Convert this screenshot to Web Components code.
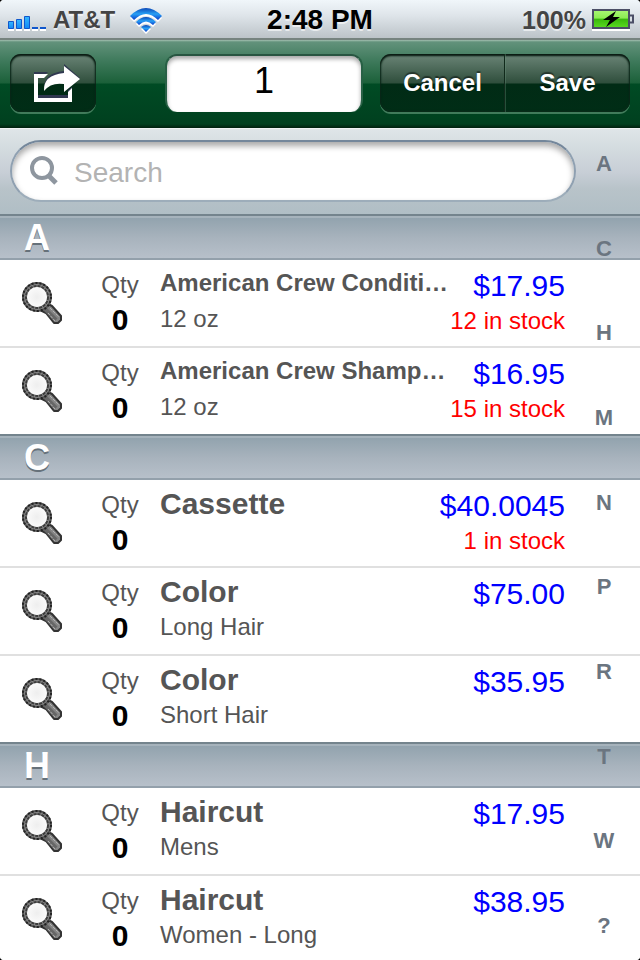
<!DOCTYPE html>
<html lang="en">
<head>
<meta charset="utf-8">
<meta name="viewport" content="width=device-width, initial-scale=1">
<title>Products</title>
<style>
  html { background: #000; }
  body { margin: 0; font-family: "Liberation Sans", Arial, sans-serif; color: #555; background: #fff; height: 100vh; overflow: hidden; position: relative; border-radius: 4px; }
</style>
</head>
<body>
<status-bar></status-bar>
<nav-bar></nav-bar>
<search-bar></search-bar>
<main>
  <item-section letter="A">
    <item-row compact name="American Crew Conditi…" detail="12 oz" price="$17.95" stock="12 in stock"></item-row>
    <item-row compact name="American Crew Shamp…" detail="12 oz" price="$16.95" stock="15 in stock"></item-row>
  </item-section>
  <item-section letter="C">
    <item-row name="Cassette" price="$40.0045" stock="1 in stock"></item-row>
    <item-row name="Color" detail="Long Hair" price="$75.00"></item-row>
    <item-row name="Color" detail="Short Hair" price="$35.95"></item-row>
  </item-section>
  <item-section letter="H">
    <item-row name="Haircut" detail="Mens" price="$17.95"></item-row>
    <item-row name="Haircut" detail="Women - Long" price="$38.95"></item-row>
  </item-section>
</main>
<letter-index letters="ACHMNPRTW?"></letter-index>

<script>
function define(name, html, setup) {
  const template = document.createElement('template');
  template.innerHTML = html;
  customElements.define(name, class extends HTMLElement {
    connectedCallback() {
      if (this.shadowRoot) return;
      const root = this.attachShadow({ mode: 'open' });
      root.append(template.content.cloneNode(true));
      if (setup) setup(this, root);
    }
  });
}

define('status-bar', `
<style>
  :host { display: grid; grid-template-columns: 1fr auto 1fr; align-items: center; height: 40px; padding: 2px 8px 0; box-sizing: border-box;
    background: linear-gradient(#f0f6fa, #dfe5ea 40%, #bcc3c8); border-bottom: 2px solid #76837f; text-shadow: 0 2px 0 rgba(255,255,255,.6); font-weight: bold; }
  div { display: flex; align-items: center; }
  .carrier { gap: 7px; font-size: 24px; color: #444; }
  .wifi { margin-left: 7px; }
  time { font-size: 28px; line-height: 36px; color: #000; }
  .power { justify-content: flex-end; gap: 6px; font-size: 25px; color: #444; }
  svg { display: block; }
  .power svg { margin-right: -2px; }
</style>
<div class="carrier">
  <svg width="38" height="22" viewBox="0 0 38 22" aria-label="Signal" role="img">
    <path d="M0 21h6M8 21h6M16 21h6M24 21h6M32 21h6" stroke="#fff" stroke-width="2"/>
    <defs><linearGradient id="g" x2="0" y2="1"><stop stop-color="#35b8ff"/><stop offset="1" stop-color="#1288f5"/></linearGradient></defs>
    <g fill="url(#g)" stroke="#1057cc"><path d="M.5 12.500h5v7h-5z"/><path d="M8.500 10.500h5v9h-5z"/><path d="M16.500 7.500h5v12h-5z"/></g>
    <path d="M24 19h6M32 19h6" stroke="#1057cc" stroke-width="2"/>
  </svg>
  <span>AT&amp;T</span>
  <svg class="wifi" width="34" height="28" viewBox="0 0 34 28" aria-label="Wi-Fi" role="img">
    <defs><linearGradient id="w" x2="0" y2="1"><stop stop-color="#0b48b8"/><stop offset=".5" stop-color="#28a0f5"/><stop offset="1" stop-color="#0a3cc8"/></linearGradient></defs>
    <g fill="#fff" transform="translate(0 2)"><path d="M1 10Q17-6 33 10L29 14Q17 2 5 14Z"/><path d="M7 16Q17 6 27 16L24 19Q17 12 10 19Z"/><path d="M12 21Q17 17 22 21L17 26Z"/></g>
    <g fill="url(#w)"><path d="M1 10Q17-6 33 10L29 14Q17 2 5 14Z"/><path d="M7 16Q17 6 27 16L24 19Q17 12 10 19Z"/><path d="M12 21Q17 17 22 21L17 26Z"/></g>
  </svg>
</div>
<time>2:48 PM</time>
<div class="power"><span>100%</span>
  <svg width="42" height="26" viewBox="0 0 42 26" aria-label="Battery charging" role="img">
    <defs><linearGradient id="b" x2="0" y2="1"><stop stop-color="#a5f570"/><stop offset=".45" stop-color="#8cec52"/><stop offset=".5" stop-color="#39b80c"/><stop offset="1" stop-color="#58d820"/></linearGradient></defs>
    <path d="M0 23h38" stroke="#fff" stroke-width="2"/>
    <rect x="1" y="3" width="36" height="18" fill="#dff5d5" stroke="#4b4e66" stroke-width="2"/>
    <rect x="2" y="4" width="34" height="16" fill="url(#b)"/>
    <path d="M38 8.500h3v7h-3" fill="none" stroke="#4b4e66" stroke-width="2"/>
    <path d="M24 4L11 13h7l-4 7 14-10h-7z" fill="#000"/>
  </svg>
</div>`);

define('nav-bar', `
<style>
  :host { display: flex; align-items: center; justify-content: space-between; height: 88px; padding: 0 10px 2px; box-sizing: border-box;
    background: linear-gradient(#a3bfb0 0, #62927b 2px, #407b5d 20px, #1b6039 43px, #004b24 44px, #00401f 84px, #00200e 88px); }
  button { height: 58px; margin: 0; padding: 0; border: 0; font: bold 24px/58px "Liberation Sans", Arial, sans-serif; color: #fff; background: none; text-shadow: 0 -2px 1px rgba(0,0,0,.45); }
  .share, .group { border-radius: 11px; overflow: hidden;
    background: linear-gradient(#6b8577, #2f4e3c 29px, #012b15 30px, #002d16); box-shadow: inset 0 2px 2px #0b1c13, inset 0 0 2px 1px #0b2c1b, 0 2px 0 rgba(130,180,150,.5); }
  .share { width: 86px; padding-left: 7px; display: grid; place-items: center; }
  input { width: 198px; height: 58px; box-sizing: border-box; margin: 0 0 0 52px; padding: 0 0 6px; border: 2px solid #286045; border-top-color: #285541; border-bottom: 0; border-radius: 12px; background: #fff;
    box-shadow: inset 0 3px 4px rgba(0,0,0,.35); text-align: center; font: 36px/50px "Liberation Sans", Arial, sans-serif; color: #000; outline: 0; }
  .group { display: flex; }
  .group button { width: 125px; }
  .group button + button { box-shadow: -1px 0 0 #10291b, inset 1px 0 0 rgba(110,150,125,.35); }
</style>
<button class="share" aria-label="Share">
  <svg width="48" height="40" viewBox="0 0 48 40">
    <path fill="#303850" d="M1 9H15L11 13H5V33H35V27L39 24V37H1ZM31 1L47 15L31 28V20Q18 18 11 27Q10 10 31 8Z"/>
    <path fill="none" stroke="#303850" stroke-width="2" d="M5 33H35"/>
    <path fill="#fff" d="M1 11H15L11 15H5V35H35V29L39 25V39H1ZM31 3L47 16L31 29V21Q18 19 11 28Q10 12 31 10Z"/>
  </svg>
</button>
<input type="text" value="1" aria-label="Quantity">
<div class="group"><button>Cancel</button><button>Save</button></div>`);

define('search-bar', `
<style>
  :host { display: block; height: 86px; padding: 11px 64px 0 10px; box-sizing: border-box; background: linear-gradient(#dfe5e8, #d3dbdf 20px, #c7ced6 44px, #b8c3c9 60px, #b0bec5); border-top: 1px solid #eef2f4; }
  label { display: flex; align-items: center; height: 62px; box-sizing: border-box; padding-left: 18px; gap: 12px; border: 2px solid #8fa0b1; border-top-color: #74879b; border-bottom-color: #9dadba; border-radius: 31px; background: #fff; box-shadow: inset 0 4px 6px rgba(0,0,0,.35); }
  svg { flex: none; }
  input { flex: 1; min-width: 0; padding: 4px 0 0; border: 0; outline: 0; background: none; font: 28px/34px "Liberation Sans", Arial, sans-serif; color: #333; }
  input::placeholder { color: #b3b3b3; opacity: 1; }
</style>
<label>
  <svg width="32" height="32" viewBox="0 0 32 32" aria-hidden="true"><circle cx="12" cy="13" r="10" fill="none" stroke="#8e969f" stroke-width="4"/><path d="M18 20L26 28" stroke="#8e969f" stroke-width="5"/></svg>
  <input type="text" placeholder="Search" aria-label="Search">
</label>`);

define('item-section', `
<style>
  :host { display: block; }
  h2 { margin: 0; height: 46px; box-sizing: border-box; padding-left: 24px; border-top: 2px solid #74848d; border-bottom: 2px solid #93a0ab;
    background: linear-gradient(#a6b3bc 0, #a6b3bc 2px, #92a3ae 2px, #a8b3bd 22px, #b7c0ca); font-size: 36px; line-height: 44px; color: #fff; text-shadow: 0 2px 0 #66717a; }
</style>
<h2></h2><slot></slot>`, (host, root) => {
  root.querySelector('h2').textContent = host.getAttribute('letter');
  host.id = 'section-' + host.getAttribute('letter');
});

define('item-row', `
<style>
  :host { display: grid; grid-template-columns: 84px 72px minmax(0, 1fr) auto; height: 88px; box-sizing: border-box; padding-right: 75px; border-bottom: 2px solid #e0e0e0; background: #fff; }
  :host(:last-of-type) { height: 86px; border-bottom: 0; }
  button { border: 0; margin: 0; padding: 0; background: none; height: 84px; display: grid; place-items: center; }
  div { display: flex; flex-direction: column; font-size: 24px; line-height: 28px; white-space: nowrap; }
  .qty { align-items: center; padding-top: 11px; }
  .qty output { font-weight: bold; font-size: 30px; line-height: 36px; margin-top: 3px; color: #000; }
  .text { padding-left: 4px; padding-top: 6px; }
  .name { font-size: 30px; line-height: 36px; font-weight: bold; }
  :host([compact]) .name { font-size: 24px; line-height: 34px; padding-bottom: 2px; }
  .detail { margin-top: 3px; }
  .cost { align-items: flex-end; padding-top: 8px; }
  .price { font-size: 30px; line-height: 36px; color: #00f; }
  .stock { margin-top: 3px; color: #f00; }
</style>
<button aria-label="View details">
  <svg width="44" height="46" viewBox="0 0 44 46">
    <defs>
      <radialGradient id="l"><stop stop-color="#eee"/><stop offset="1" stop-color="#fafafa"/></radialGradient>
    </defs>
    <path d="M20 31L28 25L32 27L41 37V41L38 44H34L26 34Z" fill="#858585" stroke="#333" stroke-width="2" stroke-linejoin="round"/>
    <path d="M25 30L36 41" stroke="#666" stroke-width="4"/>
    <path d="M28 34L35 42M30 29L39 38" stroke="#b5b5b5" stroke-width="1" stroke-dasharray="3 1"/>
    <circle cx="17" cy="18" r="12" fill="url(#l)" stroke="#858585" stroke-width="5"/>
    <circle cx="17" cy="18" r="14" fill="none" stroke="#555" stroke-width="2"/>
    <circle cx="17" cy="18" r="14" fill="none" stroke="#222" stroke-width="2" stroke-dasharray="2 2"/>
    <circle cx="17" cy="18" r="11" fill="none" stroke="#3c3c3c" stroke-width="2" stroke-dasharray="3 1"/>
    <circle cx="17" cy="18" r="10" fill="url(#l)"/>
  </svg>
</button>
<div class="qty"><span>Qty</span><output>0</output></div>
<div class="text"><span class="name"></span><span class="detail"></span></div>
<div class="cost"><span class="price"></span><span class="stock"></span></div>`, (host, root) => {
  for (const key of ['name', 'detail', 'price', 'stock'])
    root.querySelector('.' + key).textContent = host.getAttribute(key) || '';
});

define('letter-index', `
<style>
  :host { position: absolute; top: 153px; bottom: 23px; right: 0; width: 72px; }
  nav { height: 100%; display: flex; flex-direction: column; align-items: center; justify-content: space-between; }
  a { font-size: 22px; line-height: 22px; font-weight: bold; color: #6b7580; text-decoration: none; }
</style>
<nav aria-label="Index"></nav>`, (host, root) => {
  for (const letter of host.getAttribute('letters')) {
    const link = document.createElement('a');
    link.href = '#section-' + letter;
    link.textContent = letter;
    root.querySelector('nav').append(link);
  }
});
</script>
</body>
</html>
